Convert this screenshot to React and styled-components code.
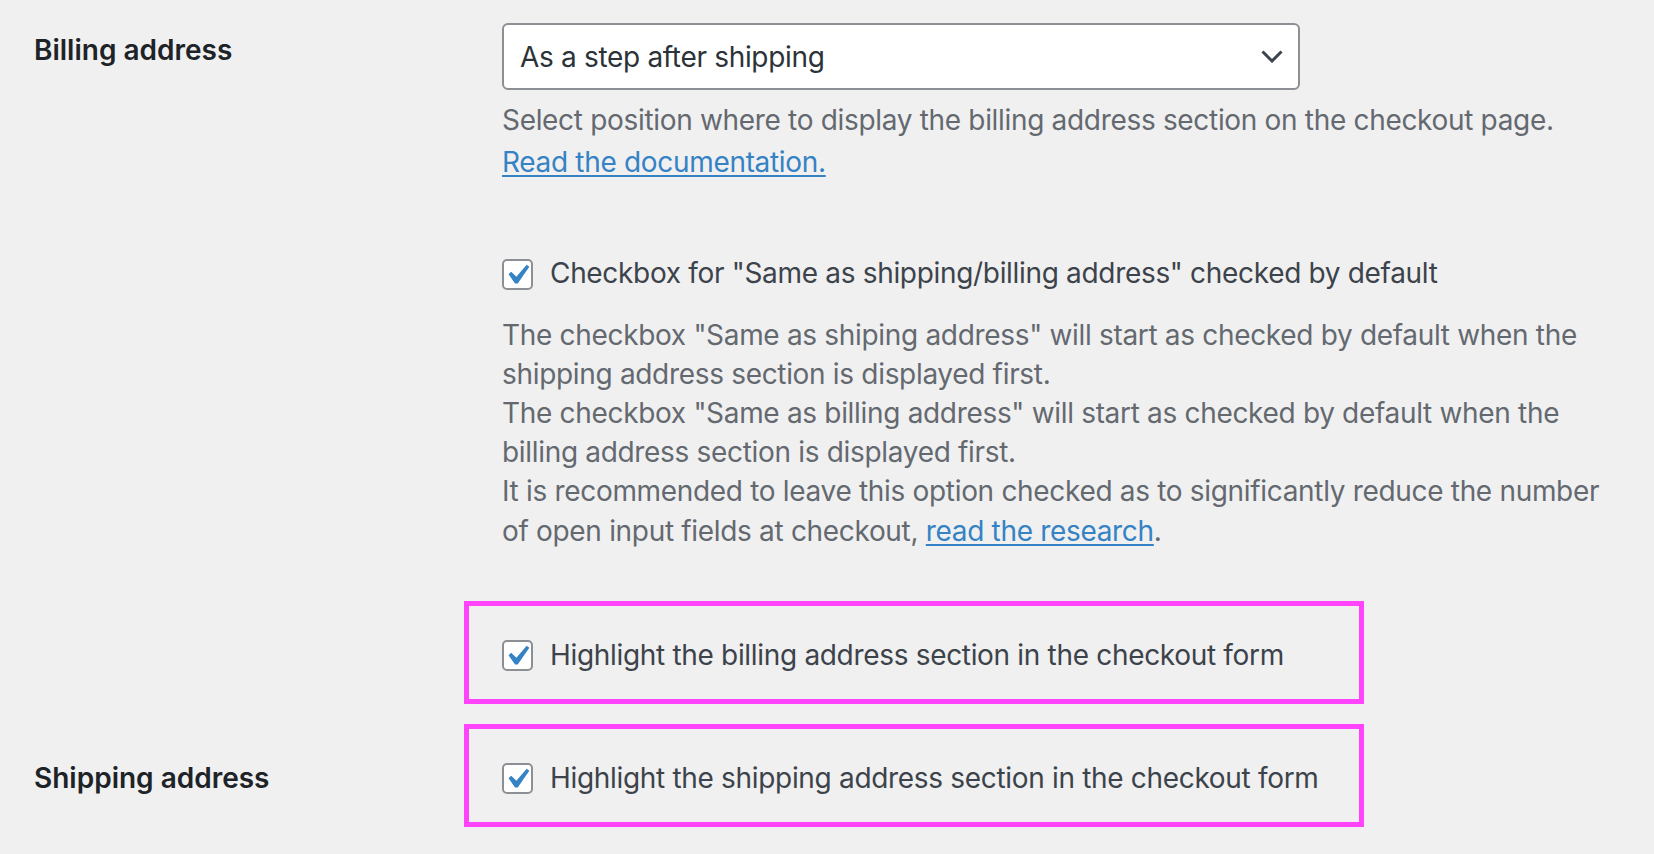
import React from "react";
import styled, { createGlobalStyle } from "styled-components";

const GlobalStyle = createGlobalStyle`
  html, body {
    margin: 0;
    padding: 0;
    background: #f0f0f1;
  }
  body {
    font-family: Inter, "Noto Sans", "Liberation Sans", sans-serif;
    letter-spacing: -0.32px;
    -webkit-font-smoothing: antialiased;
  }
`;

const Page = styled.div`
  padding: 23px 0 0 34px;
  width: 1654px;
  box-sizing: border-box;
`;

const Row = styled.div`
  display: grid;
  grid-template-columns: 468px 1fr;
  align-items: ${(p) => (p.$center ? "center" : "start")};
  margin-top: ${(p) => p.$gap || 0}px;
`;

const Label = styled.div`
  font-size: 28px;
  line-height: 36.4px;
  font-weight: 600;
  letter-spacing: 0;
  color: #1d2327;
  padding-top: ${(p) => (p.$center ? 6 : 9)}px;
`;

const Cell = styled.div`
  display: flex;
  flex-direction: column;
  align-items: flex-start;
`;

const Select = styled.div`
  box-sizing: border-box;
  width: 798px;
  height: 67px;
  border: 2px solid #8c8f94;
  border-radius: 6px;
  background: #fff;
  display: flex;
  align-items: center;
  justify-content: space-between;
  padding: 0 15px 0 16px;
  font-size: 28px;
  color: #2c3338;
`;

const Description = styled.p`
  margin: ${(p) => p.$top || 0}px 0 0;
  font-size: 28px;
  line-height: 39.2px;
  color: #646970;
  max-width: 1108px;
`;

const Link = styled.a`
  color: #3582c4;
  text-decoration: underline;
  text-underline-offset: 3px;
  text-decoration-thickness: 2px;
`;

const CheckRow = styled.label`
  display: flex;
  align-items: center;
  gap: 17px;
  margin-top: ${(p) => p.$top || 0}px;
  font-size: 28px;
  line-height: 39.2px;
  color: #3c434a;
`;

const Box = styled.span`
  box-sizing: border-box;
  width: 31px;
  height: 31px;
  flex: 0 0 31px;
  border: 2px solid #8c8f94;
  border-radius: 5px;
  background: #fff;
  display: block;
  overflow: visible;
  svg {
    display: block;
    width: 40px;
    height: 40px;
    margin: -6px 0 0 -7px;
  }
`;

const Highlight = styled.div`
  box-sizing: border-box;
  width: 900px;
  height: 103px;
  margin-left: -38px;
  border: 5px solid #ff44fb;
  padding: 6px 0 0 33px;
  display: flex;
  align-items: center;
`;

const Check = () => (
  <Box>
    <svg viewBox="0 0 20 20">
      <path
        d="M14.83 4.89l1.34.94-5.81 8.38H9.02L5.78 9.67l1.34-1.25 2.57 2.4z"
        fill="#3582c4"
      />
    </svg>
  </Box>
);

const Chevron = () => (
  <svg width="22" height="13" viewBox="0 0 22 13">
    <polyline
      points="1.5,1.5 11,11 20.5,1.5"
      fill="none"
      stroke="#3c434a"
      strokeWidth="3"
    />
  </svg>
);

export default function App() {
  return (
    <>
      <GlobalStyle />
      <Page>
        <Row>
          <Label>Billing address</Label>
          <Cell>
            <Select>
              <span>As a step after shipping</span>
              <Chevron />
            </Select>
            <Description $top={11}>
              Select position where to display the billing address section on the checkout page.
            </Description>
            <Description $top={3}>
              <Link href="#">Read the documentation.</Link>
            </Description>
          </Cell>
        </Row>
        <Row>
          <Label />
          <Cell>
            <CheckRow $top={72}>
              <Check />
              Checkbox for "Same as shipping/billing address" checked by default
            </CheckRow>
            <Description $top={22}>
              The checkbox "Same as shiping address" will start as checked by default when the shipping address section is displayed first.
              <br />
              The checkbox "Same as billing address" will start as checked by default when the billing address section is displayed first.
              <br />
              It is recommended to leave this option checked as to significantly reduce the number of open input fields at checkout,{" "}
              <Link href="#">read the research</Link>.
            </Description>
          </Cell>
        </Row>
        <Row $gap={50}>
          <Label />
          <Cell>
            <Highlight>
              <CheckRow>
                <Check />
                Highlight the billing address section in the checkout form
              </CheckRow>
            </Highlight>
          </Cell>
        </Row>
        <Row $gap={20} $center>
          <Label $center>Shipping address</Label>
          <Cell>
            <Highlight>
              <CheckRow>
                <Check />
                Highlight the shipping address section in the checkout form
              </CheckRow>
            </Highlight>
          </Cell>
        </Row>
      </Page>
    </>
  );
}
